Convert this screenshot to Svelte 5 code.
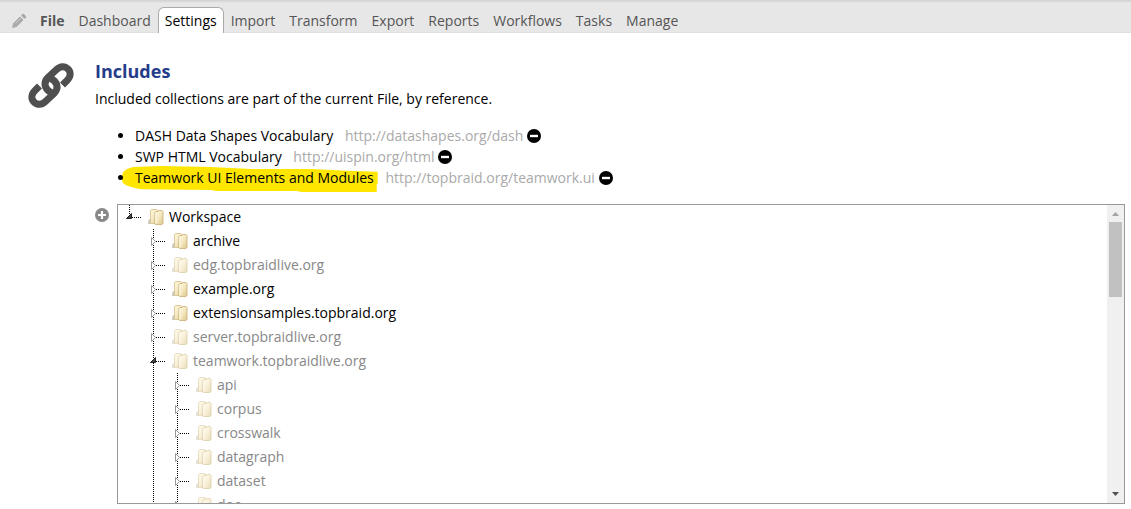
<script lang="ts">
	type TreeNode = { label: string; muted?: boolean; open?: boolean; children?: TreeNode[] };

	const tabs = ['File', 'Dashboard', 'Settings', 'Import', 'Transform', 'Export', 'Reports', 'Workflows', 'Tasks', 'Manage'];
	let active = $state('Settings');

	const includes = [
		{ name: 'DASH Data Shapes Vocabulary', uri: 'http://datashapes.org/dash' },
		{ name: 'SWP HTML Vocabulary', uri: 'http://uispin.org/html' },
		{ name: 'Teamwork UI Elements and Modules', uri: 'http://topbraid.org/teamwork.ui', marked: true }
	];

	const muted = (label: string): TreeNode => ({ label, muted: true });

	let workspace: TreeNode[] = $state([
		{
			label: 'Workspace',
			open: true,
			children: [
				{ label: 'archive' },
				muted('edg.topbraidlive.org'),
				{ label: 'example.org' },
				{ label: 'extensionsamples.topbraid.org' },
				muted('server.topbraidlive.org'),
				{
					label: 'teamwork.topbraidlive.org',
					muted: true,
					open: true,
					children: ['api', 'corpus', 'crosswalk', 'datagraph', 'dataset', 'doc'].map(muted)
				}
			]
		}
	]);
</script>

{#snippet branch(nodes: TreeNode[], root: boolean)}
	<ul class="branch" class:root>
		{#each nodes as node}
			<li>
				<div class="row" class:muted={node.muted}>
					<button class="expander" aria-label="Toggle {node.label}" onclick={() => (node.open = !node.open)}>
						<svg width="24" height="24" viewBox="0 0 24 24">
							<path d="M14 12.5H24" stroke="#000" stroke-dasharray="1 1" />
							{#if node.open}
								<path d="M8.5 13.5H13.5V8.5Z" fill="#444" stroke="#222" />
							{:else}
								<path d="M9.5 8.5V16.5L13.5 12.5Z" fill="#fff" stroke="#999" />
							{/if}
						</svg>
					</button>
					<svg class="folder" width="16" height="16" viewBox="0 0 16 16">
						<path d="M0 15C0 12 .5 10.5 2 10L3 9V15Z" fill="#cfcac0" />
						<path d="M2.5 2L3.5 .5H9L10 1.5V14.5H2.5Z" fill="url(#paper)" stroke="#d6bf88" stroke-width=".8" />
						<path d="M7 3.5L8 2.5H10L10.5 1.5H14L15 2.5V14.5L14 15.5H7.5L6.5 14.5Z" fill="url(#paper)" stroke="#c9af72" stroke-width=".8" />
						<path d="M8 4V14" stroke="#fffaea" />
					</svg>
					<span>{node.label}</span>
				</div>
				{#if node.open && node.children}
					{@render branch(node.children, false)}
				{/if}
			</li>
		{/each}
	</ul>
{/snippet}

<svg class="defs" width="0" height="0" aria-hidden="true">
	<linearGradient id="paper" x1="0" y1="0" x2="1" y2="1">
		<stop offset="0" stop-color="#fff8e0" />
		<stop offset=".5" stop-color="#f5e8c2" />
		<stop offset="1" stop-color="#dcc58a" />
	</linearGradient>
</svg>

<nav>
	<svg class="pencil" width="16" height="16" viewBox="0 0 16 16">
		<path d="M1 15L2 10.5L9 3.5L12.5 7L5.5 14Z" fill="#aaa" />
		<path d="M10 2.5L11.5 1Q12.5 .5 13.5 1.5L14.5 2.5Q15.5 3.5 15 4.5L13.5 6Z" fill="#aaa" />
		<path d="M4.5 10.5L9.5 5.5" stroke="#cfcfcf" />
	</svg>
	{#each tabs as tab}
		<a href="#{tab.toLowerCase()}" class:file={tab === 'File'} class:active={tab === active} onclick={() => (active = tab)}>{tab}</a>
	{/each}
</nav>

<main>
	<svg class="chain" width="48" height="48" viewBox="0 0 48 48" fill="none" stroke="#4f4f4f" stroke-width="7">
		<path d="M25 32C17 28 16 21.5 21 16.5L29 9C33.5 4.5 38 5 41 8C44 11 44 15.5 40 19.5L35.5 24" />
		<path d="M23 17C31 21 32 27.5 27 32.5L19 40C14.5 44.5 10 44 7 41C4 38 4 33.5 8 29.5L12.5 25" />
	</svg>
	<section>
		<h1>Includes</h1>
		<p>Included collections are part of the current File, by reference.</p>
		<ul class="includes">
			{#each includes as item}
				<li>
					<span class="name">
						{#if item.marked}
							<svg class="marker" viewBox="0 0 256 28" preserveAspectRatio="none">
								<path d="M1 11C1 5 5 3 12 1L40 0L90 1L130 3H190L225 5L256 6V18L255 19V27H180L175 26H95L90 25L20 24C10 22 1 20 1 15Z" fill="#ffe600" />
							</svg>
						{/if}
						{item.name}
					</span>
					<span class="uri">{item.uri}</span>
					<button class="remove" aria-label="Remove {item.name}">
						<svg width="14" height="14" viewBox="0 0 14 14">
							<circle cx="7" cy="7" r="7" fill="#000" />
							<path d="M3 7H11" stroke="#fff" stroke-width="2.4" />
						</svg>
					</button>
				</li>
			{/each}
		</ul>
		<div class="picker">
			<button class="add" aria-label="Add include">
				<svg width="14" height="14" viewBox="0 0 14 14">
					<circle cx="7" cy="7" r="7" fill="#888" />
					<path d="M3 7H11M7 3V11" stroke="#fff" stroke-width="2.2" />
				</svg>
			</button>
			<div class="tree">
				<div class="nodes">{@render branch(workspace, true)}</div>
				<div class="scrollbar" aria-hidden="true">
					<svg width="17" height="17"><path d="M5 11H12L8.5 7Z" fill="#a3a3a3" /></svg>
					<div class="thumb"></div>
					<svg class="down" width="17" height="17"><path d="M5 6H12L8.5 10Z" fill="#505050" /></svg>
				</div>
			</div>
		</div>
	</section>
</main>

<style>
	:global(body) {
		background: #fff;
		color: #000;
		font: 14px/20px 'Open Sans', sans-serif;
	}

	ul {
		list-style: none;
		margin: 0;
		padding: 0;
	}

	svg {
		display: block;
		flex: none;
	}

	button {
		padding: 0;
		border: 0;
		background: none;
		cursor: pointer;
	}

	.defs {
		position: absolute;
	}

	nav {
		display: flex;
		align-items: flex-end;
		height: 33px;
		box-sizing: border-box;
		padding-left: 11px;
		background: linear-gradient(#d0d0d0, #e7e7e7 3px);
		border-bottom: 1px solid #dcdfe3;
	}

	.pencil {
		margin: 0 6px 3px 0;
	}

	nav a {
		padding: 3px 6px 1px;
		border: 1px solid transparent;
		border-bottom: 0;
		border-radius: 6px 6px 0 0;
		color: #555;
		text-decoration: none;
	}

	nav a.file {
		font-weight: 700;
	}

	nav a.active {
		margin-bottom: -1px;
		padding-bottom: 2px;
		border-color: #aaa;
		background: #fff;
		color: #000;
	}

	main {
		display: flex;
		gap: 20px;
		padding: 28px 6px 0 27px;
	}

	section {
		flex: 1;
		min-width: 0;
	}

	h1 {
		margin: 0 0 8px;
		color: #253c8b;
		font-size: 18px;
		line-height: 20px;
	}

	p {
		margin: 0;
	}

	.includes {
		isolation: isolate;
		margin: 16px 0;
		padding-left: 40px;
		list-style: disc;
	}

	.includes li {
		line-height: 21px;
	}

	.name {
		position: relative;
		margin-right: 8px;
	}

	.marker {
		position: absolute;
		top: -2px;
		left: -14px;
		z-index: -1;
		width: calc(100% + 18px);
		height: 27px;
	}

	.uri {
		color: #aaa;
	}

	.remove {
		vertical-align: -2px;
	}

	.picker {
		display: flex;
		align-items: flex-start;
		gap: 8px;
	}

	.add {
		margin-top: 4px;
	}

	.tree {
		display: flex;
		flex: 1;
		height: 298px;
		border: 1px solid #999;
		overflow: hidden;
	}

	.nodes {
		flex: 1;
		overflow: hidden;
	}

	.branch {
		background: repeating-linear-gradient(#000 0 1px, transparent 1px 2px) 11px 0 / 1px 100% no-repeat;
	}

	.branch.root {
		background-size: 1px 12px;
	}

	.branch .branch {
		margin-left: 24px;
	}

	.row {
		display: flex;
		align-items: center;
		height: 24px;
	}

	.folder {
		margin: 0 5px 0 6px;
	}

	.muted {
		color: #888;
	}

	.muted .folder {
		opacity: 0.6;
	}

	.scrollbar {
		display: flex;
		flex-direction: column;
		width: 17px;
		background: #f0f0f0;
	}

	.thumb {
		height: 75px;
		margin: 0 2px;
		background: #c1c1c1;
	}

	.down {
		margin-top: auto;
	}
</style>
